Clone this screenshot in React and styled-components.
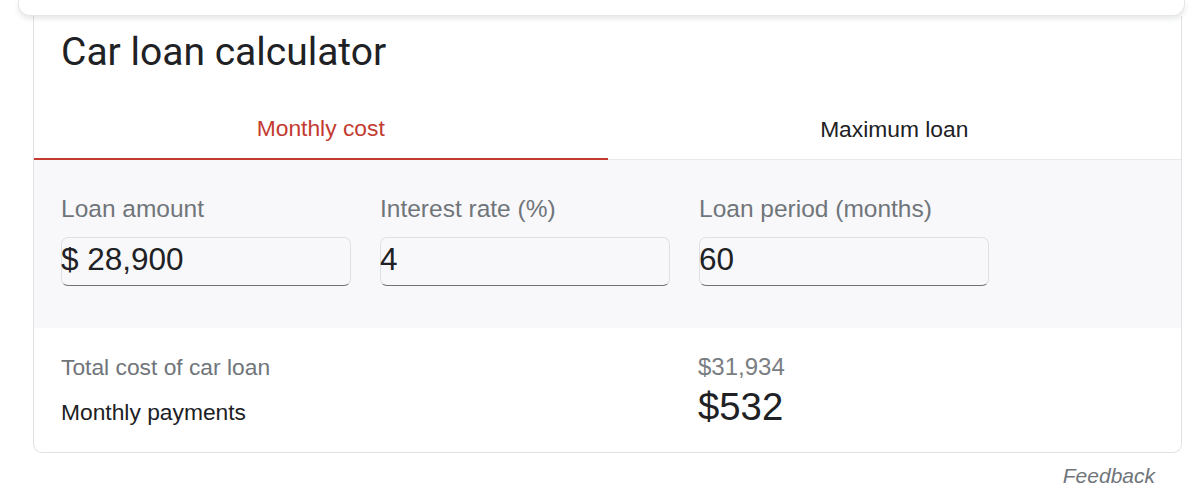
import React from "react";
import styled, { createGlobalStyle } from "styled-components";

const GlobalStyle = createGlobalStyle`
  body {
    margin: 0;
    background: #ffffff;
    font-family: "Liberation Sans", Arial, sans-serif;
    color: #202124;
  }
`;

const fields = [
  { label: "Loan amount", value: "$ 28,900" },
  { label: "Interest rate (%)", value: "4" },
  { label: "Loan period (months)", value: "60" },
];

const App = () => {
  return (
    <Page>
      <GlobalStyle />
      <TopBar />
      <Card>
        <Title>Car loan calculator</Title>
        <Tabs>
          <Tab active>Monthly cost</Tab>
          <Tab>Maximum loan</Tab>
        </Tabs>
        <Inputs>
          {fields.map((f) => (
            <Field key={f.label}>
              <Label>{f.label}</Label>
              <InputBox>{f.value}</InputBox>
            </Field>
          ))}
        </Inputs>
        <Results>
          <ResultLabel muted>Total cost of car loan</ResultLabel>
          <ResultValue muted>$31,934</ResultValue>
          <ResultLabel>Monthly payments</ResultLabel>
          <ResultValue big>$532</ResultValue>
        </Results>
      </Card>
      <Feedback>Feedback</Feedback>
    </Page>
  );
};

const Page = styled.div`
  width: 1201px;
  height: 492px;
  overflow: hidden;
`;

const TopBar = styled.div`
  position: relative;
  z-index: 2;
  height: 15px;
  margin: 0 16px 0 18px;
  background: #ffffff;
  border: 1px solid #e6e6ea;
  border-top: none;
  border-radius: 0 0 12px 12px;
  box-shadow: 0 3px 5px rgba(60, 64, 67, 0.12);
`;

const Card = styled.div`
  margin: 0 19px 0 33px;
  border: 1px solid #dfe1e5;
  border-top: none;
  border-radius: 0 0 9px 9px;
  overflow: hidden;
`;

const Title = styled.h1`
  margin: 0;
  padding: 14px 27px 0;
  font-family: Roboto, "Liberation Sans", sans-serif;
  font-weight: 400;
  font-size: 39px;
  line-height: 44px;
  color: #202124;
`;

const Tabs = styled.div`
  display: grid;
  grid-template-columns: 1fr 1fr;
  margin-top: 28px;
`;

const Tab = styled.div`
  height: 58px;
  box-sizing: border-box;
  display: flex;
  align-items: center;
  justify-content: center;
  padding-bottom: 3px;
  font-size: 22.8px;
  color: ${(p) => (p.active ? "#c33b30" : "#202124")};
  border-bottom: ${(p) => (p.active ? "2px solid #c33b30" : "1px solid #e8eaed")};
`;

const Inputs = styled.div`
  display: grid;
  grid-template-columns: repeat(3, 290px);
  column-gap: 29px;
  padding: 35px 27px 42px;
  background: #f8f8fa;
`;

const Field = styled.div`
  display: flex;
  flex-direction: column;
`;

const Label = styled.div`
  font-size: 24.5px;
  line-height: 28px;
  color: #70757a;
`;

const InputBox = styled.div`
  margin-top: 14px;
  height: 49px;
  box-sizing: border-box;
  display: flex;
  align-items: center;
  padding: 0 0 5px 0;
  text-indent: -1px;
  font-size: 31.5px;
  color: #202124;
  border: 1px solid #e0e0e4;
  border-bottom: 1.5px solid #6f7378;
  border-radius: 7px;
`;

const Results = styled.div`
  display: grid;
  grid-template-columns: 637px 1fr;
  row-gap: 6px;
  align-items: baseline;
  padding: 26px 27px 24px;
`;

const ResultLabel = styled.div`
  font-size: 22.8px;
  line-height: 26px;
  color: ${(p) => (p.muted ? "#70757a" : "#202124")};
`;

const ResultValue = styled.div`
  font-size: ${(p) => (p.big ? "38.3px" : "24px")};
  line-height: ${(p) => (p.big ? "42px" : "26px")};
  color: ${(p) => (p.muted ? "#7a7e83" : "#202124")};
`;

const Feedback = styled.div`
  margin: 11px 46px 0 0;
  text-align: right;
  font-size: 21px;
  line-height: 24px;
  font-style: italic;
  color: #70757a;
`;

export default App;
